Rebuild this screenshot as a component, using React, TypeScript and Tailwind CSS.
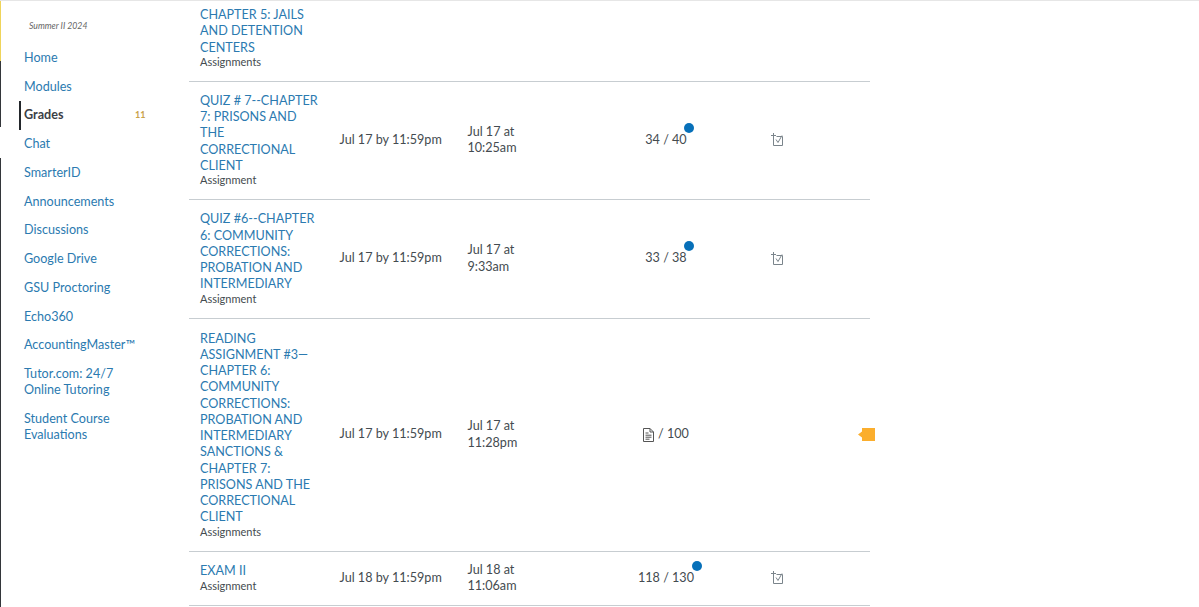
const navItems = [
  "Home",
  "Modules",
  "Grades",
  "Chat",
  "SmarterID",
  "Announcements",
  "Discussions",
  "Google Drive",
  "GSU Proctoring",
  "Echo360",
  "AccountingMaster™",
  "Tutor.com: 24/7 Online Tutoring",
  "Student Course Evaluations",
];

type Row = {
  title: string;
  kind: string;
  due?: string;
  submitted?: string;
  score?: string;
  dotClass?: string;
  quiz?: boolean;
  doc?: boolean;
  flag?: boolean;
  rowClass: string;
};

const rows: Row[] = [
  {
    title: "CHAPTER 5: JAILS AND DETENTION CENTERS",
    kind: "Assignments",
    rowClass: "h-[81px] pt-[6px] items-start",
  },
  {
    title: "QUIZ # 7--CHAPTER 7: PRISONS AND THE CORRECTIONAL CLIENT",
    kind: "Assignment",
    due: "Jul 17 by 11:59pm",
    submitted: "Jul 17 at 10:25am",
    score: "34 / 40",
    dotClass: "left-[39px]",
    quiz: true,
    rowClass: "h-[118px] items-center",
  },
  {
    title: "QUIZ #6--CHAPTER 6: COMMUNITY CORRECTIONS: PROBATION AND INTERMEDIARY",
    kind: "Assignment",
    due: "Jul 17 by 11:59pm",
    submitted: "Jul 17 at 9:33am",
    score: "33 / 38",
    dotClass: "left-[39px]",
    quiz: true,
    rowClass: "h-[119px] items-center",
  },
  {
    title:
      "READING ASSIGNMENT #3—CHAPTER 6: COMMUNITY CORRECTIONS: PROBATION AND INTERMEDIARY SANCTIONS & CHAPTER 7: PRISONS AND THE CORRECTIONAL CLIENT",
    kind: "Assignments",
    due: "Jul 17 by 11:59pm",
    submitted: "Jul 17 at 11:28pm",
    doc: true,
    flag: true,
    rowClass: "h-[233px] items-center",
  },
  {
    title: "EXAM II",
    kind: "Assignment",
    due: "Jul 18 by 11:59pm",
    submitted: "Jul 18 at 11:06am",
    score: "118 / 130",
    dotClass: "left-[54px]",
    quiz: true,
    rowClass: "h-[54px] items-center",
  },
];

function QuizIcon() {
  return (
    <svg width="12" height="13" viewBox="0 0 12 13" fill="none" stroke="#7a848b" strokeWidth="1">
      <path d="M0 2.5h5M2.5 0v12.5h9V3.5h-6" />
      <path d="M5 6.5l2 3L11 2.5" />
    </svg>
  );
}

function DocIcon() {
  return (
    <svg width="11" height="14" viewBox="0 0 11 14" fill="none" stroke="#555" strokeWidth="1">
      <path d="M.5.5h6.5l3.5 3.5v9.5H.5z" />
      <path d="M7 .5V4h3.5" />
      <path d="M2.5 5h3M2.5 7.2h6M2.5 9.2h6M2.5 11.2h4" />
    </svg>
  );
}

function FlagIcon() {
  return (
    <svg width="17" height="13" viewBox="0 0 17 13" fill="#fbae2d">
      <path d="M4 0h13v13H4V9.5L0 6.5 4 3.5z" />
    </svg>
  );
}

function Sidebar() {
  return (
    <aside className="w-[189px] shrink-0 flex">
      <div className="w-[1px] flex flex-col">
        <div className="h-[60px] bg-[#efd45a]" />
        <div className="h-[66px] bg-[#33363a]" />
        <div className="h-[31px]" />
        <div className="flex-1 bg-[#33363a]" />
      </div>
      <div className="flex-1">
        <p className="pl-[28px] pt-[19px] text-[8.7px] leading-[12px] italic text-[#666]">Summer II 2024</p>
        <nav className="mt-[11.6px] flex flex-col text-[12.6px] leading-[16.25px]">
          {navItems.map((item) => (
            <a
              key={item}
              className={
                item === "Grades"
                  ? "relative py-[6.25px] pl-[23px] font-bold text-[#3b4046]"
                  : "w-[120px] py-[6.25px] pl-[23px] box-content text-[#2b7ab0]"
              }
            >
              {item}
              {item === "Grades" && (
                <>
                  <span className="absolute left-[18px] top-0 h-[29px] w-[2px] bg-[#23272b]" />
                  <span className="absolute left-[134px] top-[8px] text-[9px] leading-[12px] text-[#c9a24a]">11</span>
                </>
              )}
            </a>
          ))}
        </nav>
      </div>
    </aside>
  );
}

export default function App() {
  return (
    <div
      className="h-[607px] w-[1199px] overflow-hidden bg-white border-t border-[#e6e6e6] flex"
      style={{ fontFamily: "Lato, 'Open Sans', sans-serif" }}
    >
      <Sidebar />
      <main className="w-[681px] text-[12.6px] leading-[16.25px] text-[#444b50]">
        {rows.map((row) => (
          <div key={row.title} className={`flex border-b border-[#c7cdd1] ${row.rowClass}`}>
            <div className="w-[139px] pl-[11px] pr-[8px] pb-[2px] shrink-0">
              <a className="text-[#2b7ab0]">{row.title}</a>
              <div className="text-[11px] leading-[12px] text-[#444b50] whitespace-nowrap h-[12px] flex items-center">
                {row.kind}
              </div>
            </div>
            <div className="w-[128px] pl-[11.5px] pb-[1px] shrink-0">{row.due}</div>
            <div className="w-[144px] pl-[11.5px] pr-[62px] pb-[1px] shrink-0">{row.submitted}</div>
            <div className="w-[132px] pb-[1px] shrink-0 flex justify-center items-center gap-[4px]">
              {row.score && (
                <span className="relative">
                  {row.score}
                  <span className={`absolute -top-[9px] h-[10px] w-[10px] rounded-full bg-[#0770b9] ${row.dotClass}`} />
                </span>
              )}
              {row.doc && (
                <>
                  <DocIcon />
                  <span>/ 100</span>
                </>
              )}
            </div>
            <div className="w-[90px] shrink-0 flex justify-center">
              {row.quiz && (
                <span className="mb-[2px]">
                  <QuizIcon />
                </span>
              )}
            </div>
            <div className="flex-1 relative">
              {row.flag && (
                <span className="absolute right-[-5px] top-[-7px]">
                  <FlagIcon />
                </span>
              )}
            </div>
          </div>
        ))}
      </main>
    </div>
  );
}
